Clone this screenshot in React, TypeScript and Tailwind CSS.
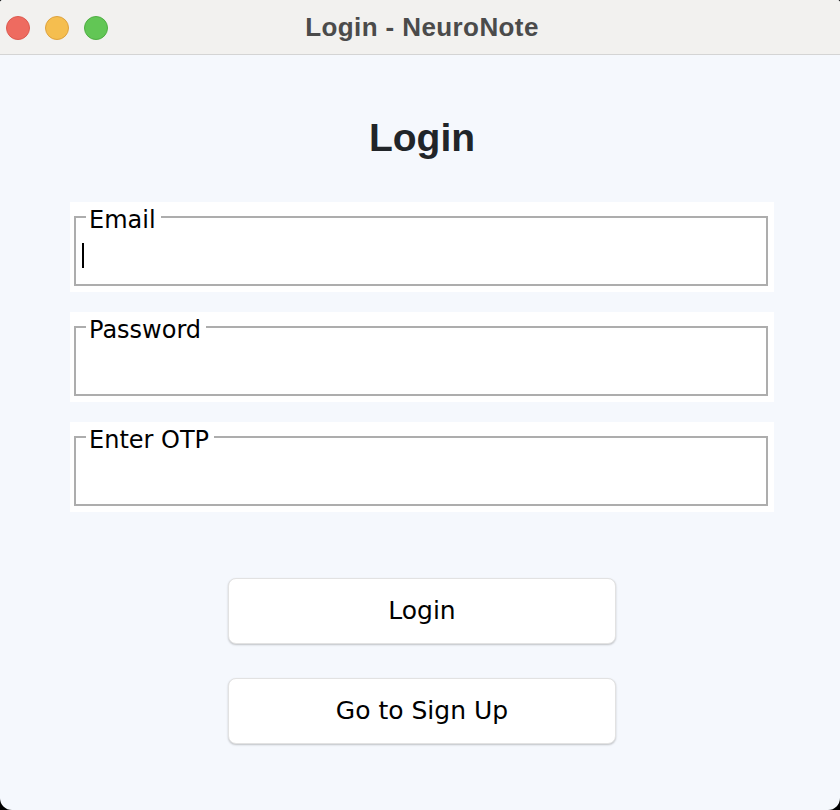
import React from "react";

const sans = { fontFamily: '"DejaVu Sans", "Noto Sans", sans-serif' };
const helv = { fontFamily: '"Liberation Sans", Arial, sans-serif' };

function Field({ label, cursor }: { label: string; cursor?: boolean }) {
  return (
    <div className="bg-white pl-[4px] pr-[6px] pb-[6px]">
      <fieldset className="h-[84px] border-2 border-[#adadad] pl-[6px] pr-[6px]">
        <legend
          className="ml-[4px] pl-[3px] pr-[5px] pt-[6px] text-[24px] leading-[24px] text-black"
          style={sans}
        >
          {label}
        </legend>
        {cursor && <div className="mt-[11px] h-[25px] w-[2px] bg-black" />}
      </fieldset>
    </div>
  );
}

function Btn({ children }: { children: React.ReactNode }) {
  return (
    <button
      className="flex h-[66px] w-[388px] items-center justify-center rounded-[8px] border border-[#e2e2e2] bg-white text-[25px] text-black shadow-[0_1px_2px_rgba(0,0,0,0.22)]"
      style={sans}
    >
      {children}
    </button>
  );
}

export default function App() {
  return (
    <div className="h-[810px] w-[840px] bg-black">
      <div className="flex h-[810px] w-[840px] flex-col overflow-hidden rounded-b-[12px] rounded-t-[3px] bg-[#f5f8fd]">
        <div className="relative flex h-[55px] shrink-0 items-center border-b border-[#d4d4d4] bg-[#f2f1ef]">
          <div className="flex items-center gap-[15px] pl-[6px] pt-[1px]">
            <div className="h-[24px] w-[24px] rounded-full border border-[#dd5a50] bg-[#ee6b60]" />
            <div className="h-[24px] w-[24px] rounded-full border border-[#dea23d] bg-[#f5be4f]" />
            <div className="h-[24px] w-[24px] rounded-full border border-[#4fae43] bg-[#62c655]" />
          </div>
          <div className="absolute inset-0 flex items-center justify-center pl-[4px] pt-[1px]">
            <span
              className="text-[26px] font-bold tracking-[0.4px] text-[#4b4b4b]"
              style={helv}
            >
              Login - NeuroNote
            </span>
          </div>
        </div>
        <div className="flex flex-col items-center pt-[60px]">
          <h1
            className="pl-[4px] text-[39px] font-bold leading-[45px] text-[#212529]"
            style={helv}
          >
            Login
          </h1>
          <div className="ml-[4px] mt-[42px] flex w-[704px] flex-col gap-[20px]">
            <Field label="Email" cursor />
            <Field label="Password" />
            <Field label="Enter OTP" />
          </div>
          <div className="ml-[4px] mt-[66px] flex flex-col gap-[34px]">
            <Btn>Login</Btn>
            <Btn>Go to Sign Up</Btn>
          </div>
        </div>
      </div>
    </div>
  );
}
